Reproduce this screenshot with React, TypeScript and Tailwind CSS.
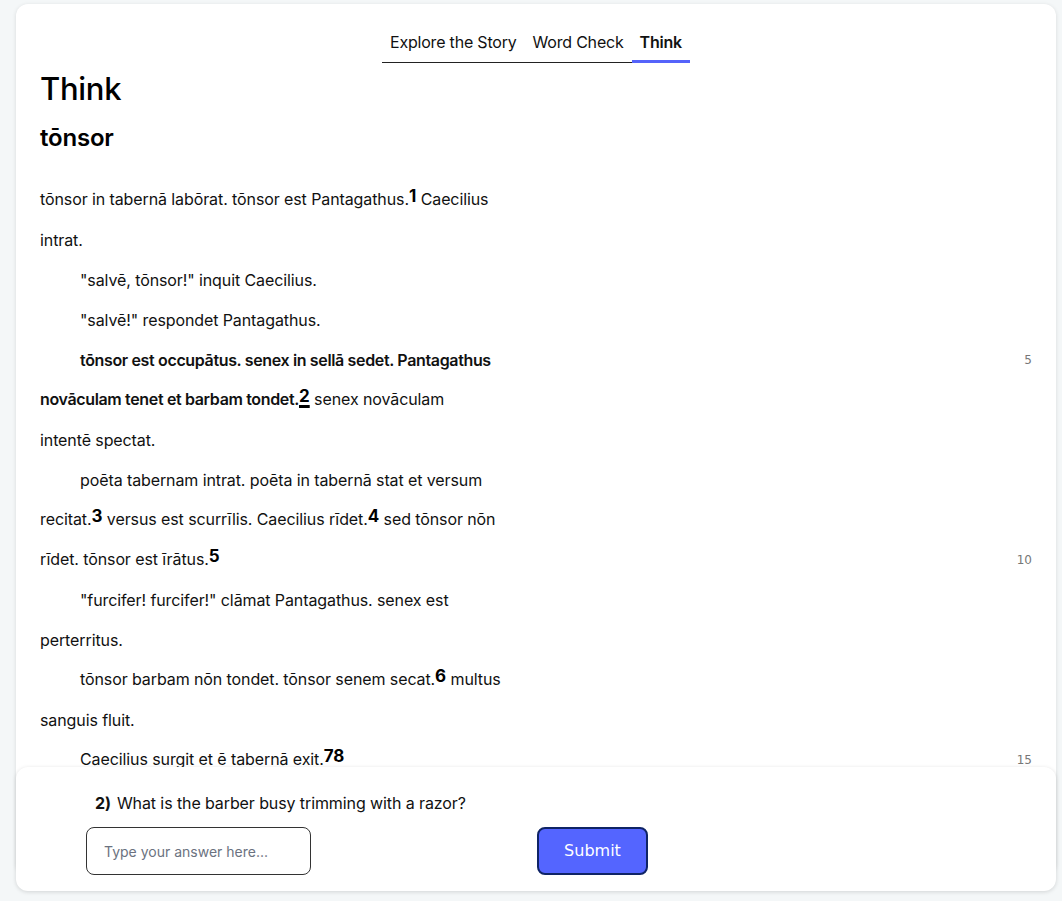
import type { ReactNode } from 'react'

type Part = { text: string; bold?: boolean; note?: string; active?: boolean }

interface Row {
  indent?: boolean
  parts: Part[]
  num?: number
}

const rows: Row[] = [
  { parts: [{ text: 'tōnsor in tabernā labōrat. tōnsor est Pantagathus.', note: '1' }, { text: ' Caecilius' }] },
  { parts: [{ text: 'intrat.' }] },
  { indent: true, parts: [{ text: '"salvē, tōnsor!" inquit Caecilius.' }] },
  { indent: true, parts: [{ text: '"salvē!" respondet Pantagathus.' }] },
  { indent: true, num: 5, parts: [{ text: 'tōnsor est occupātus. senex in sellā sedet. Pantagathus', bold: true }] },
  {
    parts: [
      { text: 'novāculam tenet et barbam tondet.', bold: true, note: '2', active: true },
      { text: ' senex novāculam' },
    ],
  },
  { parts: [{ text: 'intentē spectat.' }] },
  { indent: true, parts: [{ text: 'poēta tabernam intrat. poēta in tabernā stat et versum' }] },
  {
    parts: [
      { text: 'recitat.', note: '3' },
      { text: ' versus est scurrīlis. Caecilius rīdet.', note: '4' },
      { text: ' sed tōnsor nōn' },
    ],
  },
  { num: 10, parts: [{ text: 'rīdet. tōnsor est īrātus.', note: '5' }] },
  { indent: true, parts: [{ text: '"furcifer! furcifer!" clāmat Pantagathus. senex est' }] },
  { parts: [{ text: 'perterritus.' }] },
  { indent: true, parts: [{ text: 'tōnsor barbam nōn tondet. tōnsor senem secat.', note: '6' }, { text: ' multus' }] },
  { parts: [{ text: 'sanguis fluit.' }] },
  { indent: true, num: 15, parts: [{ text: 'Caecilius surgit et ē tabernā exit.', note: '78' }] },
  { parts: [{ text: '' }] },
  { parts: [{ text: '' }] },
]

const tabs = ['Explore the Story', 'Word Check', 'Think']

function Note({ children, active }: { children: ReactNode; active?: boolean }) {
  return (
    <span
      className={
        'relative -top-[3px] text-[17px] font-bold tracking-normal text-black ' +
        (active ? 'underline decoration-[3px] underline-offset-[3px]' : '')
      }
    >
      {children}
    </span>
  )
}

function Line({ row }: { row: Row }) {
  return (
    <div className="flex h-10 items-center">
      <div className={'flex-1 whitespace-pre text-[16px] tracking-[-0.1px] text-[#111] ' + (row.indent ? 'pl-10' : '')}>
        {row.parts.map((p, i) => (
          <span key={i} className={p.bold ? 'font-semibold tracking-[-0.35px]' : ''}>
            {p.text}
            {p.note && <Note active={p.active}>{p.note}</Note>}
          </span>
        ))}
      </div>
      <span className="w-8 text-right font-['DejaVu_Sans',sans-serif] text-[12px] text-[#777]">{row.num}</span>
    </div>
  )
}

export default function App() {
  return (
    <div className="relative h-[901px] overflow-hidden bg-[#f4f7f8] pl-4 pr-[6px] pt-1 font-['Inter',sans-serif]">
      <div className="h-[870px] overflow-hidden rounded-xl bg-white pl-6 pr-6 shadow-[0_1px_4px_rgba(0,0,0,0.12)]">
        <nav className="flex items-end justify-center pt-[26px]">
          {tabs.map(t => (
            <div
              key={t}
              className={
                'px-2 text-[16px] leading-6 tracking-[-0.2px] text-[#111] ' +
                (t === 'Think'
                  ? 'border-b-[3px] border-[#5563fa] pb-[6px] font-semibold'
                  : 'border-b border-[#222] pb-[8px]')
              }
            >
              {t}
            </div>
          ))}
        </nav>

        <h1 className="mt-[6px] text-[31px] font-medium leading-10 tracking-[-0.3px] text-black">Think</h1>
        <h2 className="mt-[13px] text-[24px] font-semibold leading-8 tracking-[-0.2px] text-black">tōnsor</h2>

        <div className="mt-[26px]">
          {rows.map((r, i) => (
            <Line key={i} row={r} />
          ))}
        </div>
      </div>

      <div className="absolute bottom-[10px] left-4 right-[6px] h-[124px] rounded-xl bg-white pl-[70px] pt-6 shadow-[0_1px_4px_rgba(0,0,0,0.14)]">
        <p className="pl-[9px] text-[16px] leading-6 tracking-[-0.1px] text-[#111]">
          <span className="mr-[6px] font-bold">2)</span>What is the barber busy trimming with a razor?
        </p>
        <div className="mt-3 flex items-center">
          <input
            className="h-12 w-[225px] rounded-lg border border-[#333] pl-[17px] text-[14px] text-[#111] outline-none placeholder:text-[#6b7280]"
            placeholder="Type your answer here..."
          />
          <button className="ml-[226px] h-12 w-[111px] rounded-lg border-2 border-[#0f2466] bg-[#5465ff] font-['DejaVu_Sans',sans-serif] text-[16px] text-white">
            Submit
          </button>
        </div>
      </div>
    </div>
  )
}
